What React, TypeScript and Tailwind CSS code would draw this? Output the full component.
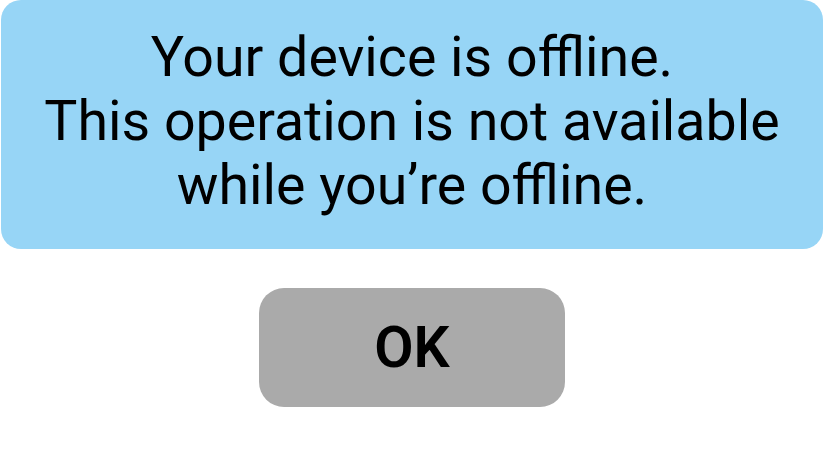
export default function App() {
  return (
    <div className="w-[825px] h-[470px] bg-white relative" style={{ fontFamily: "Roboto, sans-serif" }}>
      <div className="ml-px w-[822px] h-[249px] bg-[#97d5f6] rounded-[20px] flex flex-col items-center pt-[26px] text-black text-[55.5px] leading-[64px] text-center">
        <div>Your device is offline.</div>
        <div>This operation is not available</div>
        <div>while you’re offline.</div>
      </div>
      <div className="flex justify-center mt-[39px]">
        <div className="w-[306px] h-[119px] bg-[#aaaaaa] rounded-[25px] flex items-center justify-center text-black font-semibold text-[57px] ml-[-1px]">
          OK
        </div>
      </div>
    </div>
  );
}
